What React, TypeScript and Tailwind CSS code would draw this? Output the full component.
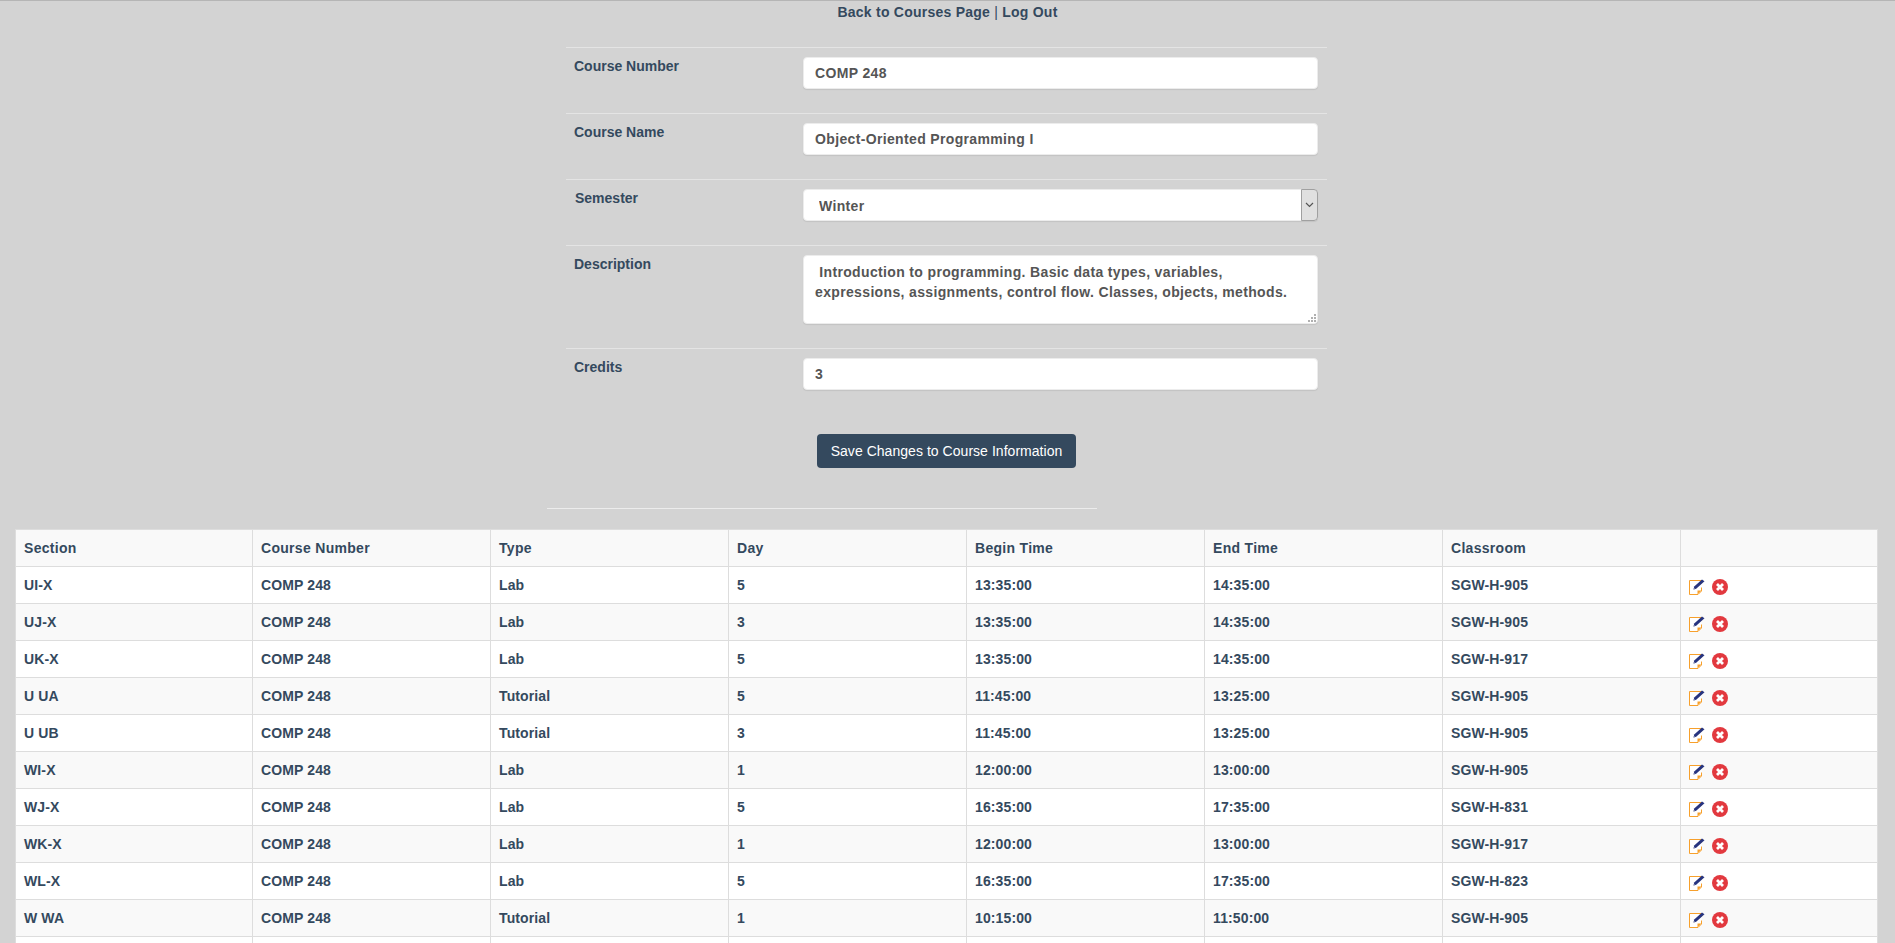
const rows = [
  ["UI-X", "COMP 248", "Lab", "5", "13:35:00", "14:35:00", "SGW-H-905"],
  ["UJ-X", "COMP 248", "Lab", "3", "13:35:00", "14:35:00", "SGW-H-905"],
  ["UK-X", "COMP 248", "Lab", "5", "13:35:00", "14:35:00", "SGW-H-917"],
  ["U UA", "COMP 248", "Tutorial", "5", "11:45:00", "13:25:00", "SGW-H-905"],
  ["U UB", "COMP 248", "Tutorial", "3", "11:45:00", "13:25:00", "SGW-H-905"],
  ["WI-X", "COMP 248", "Lab", "1", "12:00:00", "13:00:00", "SGW-H-905"],
  ["WJ-X", "COMP 248", "Lab", "5", "16:35:00", "17:35:00", "SGW-H-831"],
  ["WK-X", "COMP 248", "Lab", "1", "12:00:00", "13:00:00", "SGW-H-917"],
  ["WL-X", "COMP 248", "Lab", "5", "16:35:00", "17:35:00", "SGW-H-823"],
  ["W WA", "COMP 248", "Tutorial", "1", "10:15:00", "11:50:00", "SGW-H-905"],
];
const headers = ["Section", "Course Number", "Type", "Day", "Begin Time", "End Time", "Classroom", ""];
const inputCls =
  "block w-full h-8 px-[11px] bg-white rounded-[4px] border border-[#ececec] text-[14px] font-bold tracking-[0.35px] text-[#555555] outline-none shadow-[0_1px_1px_rgba(0,0,0,0.08)]";

function EditIcon() {
  return (
    <svg width="16" height="16" viewBox="0 0 16 16" className="block shrink-0">
      <path d="M12.5 4.5V1.5H0.5V15.5H9L12.5 12V8.5" fill="#fff" stroke="#f7a02c" strokeWidth="1" />
      <path d="M8.5 15.5V11.5H12.5Z" fill="#f7a02c" />
      <path d="M4.5 10.5L5.2 7.6L13 0.5L15.5 2.2L7.2 9.8Z" fill="#27347f" />
      <path d="M4.5 10.5L5 8.8L6.4 9.9Z" fill="#8a8fb0" />
    </svg>
  );
}

function DeleteIcon() {
  return (
    <svg width="16" height="16" viewBox="0 0 16 16" className="block shrink-0">
      <circle cx="8" cy="8" r="8" fill="#e2393f" />
      <path d="M5 5L11 11M11 5L5 11" stroke="#fff" strokeWidth="2.8" />
    </svg>
  );
}

function FormRow({ label, children, shift }: { label: string; children: React.ReactNode; shift?: boolean }) {
  return (
    <div className="flex border-t border-[#e4e4e4] pt-[9px] pb-6">
      <label className={shift ? "w-[237px] pl-[9px] -mt-px shrink-0 text-[14px] leading-5 font-bold text-[#34495e]" : "w-[237px] pl-2 -mt-px shrink-0 text-[14px] leading-5 font-bold text-[#34495e]"}>
        {label}
      </label>
      <div className="w-[515px]">{children}</div>
    </div>
  );
}

export default function App() {
  return (
    <div className="h-[943px] overflow-hidden bg-[#d3d3d3] border-t border-[#b5b5b5] font-['Liberation_Sans',Arial,sans-serif] text-[14px] leading-5 text-[#34495e]">
      <div className="text-center font-bold h-[46px] pt-[1px] tracking-[0.24px]">
        <a>Back to Courses Page</a> <span className="font-normal">|</span> <a>Log Out</a>
      </div>

      <form className="w-[761px] ml-[566px]">
        <FormRow label="Course Number">
          <input className={inputCls} defaultValue="COMP 248" readOnly />
        </FormRow>
        <FormRow label="Course Name">
          <input className={inputCls} defaultValue="Object-Oriented Programming I" readOnly />
        </FormRow>
        <FormRow label="Semester" shift>
          <div className="relative h-8">
            <select className={inputCls + " appearance-none pl-[15px] pt-px"} defaultValue="Winter">
              <option>Winter</option>
            </select>
            <span className="absolute right-0 top-0 h-8 w-[17px] flex items-center justify-center bg-[#e0e0e0] border border-[#a0a0a0] rounded-r-[4px]">
              <svg width="9" height="6" viewBox="0 0 9 6">
                <path d="M1 1L4.5 4.5L8 1" fill="none" stroke="#555" strokeWidth="1.2" />
              </svg>
            </span>
          </div>
        </FormRow>
        <FormRow label="Description">
          <div className="relative">
            <textarea
              className={inputCls + " h-[69px] py-1.5 leading-5 resize-none"}
              defaultValue=" Introduction to programming. Basic data types, variables, expressions, assignments, control flow. Classes, objects, methods."
              readOnly
            />
            <svg width="8" height="8" viewBox="0 0 8 8" className="absolute right-[2px] bottom-[2px]">
              <path d="M6 0h2v2H6zM3 3h2v2H3zM6 3h2v2H6zM0 6h2v2H0zM3 6h2v2H3zM6 6h2v2H6z" fill="#b0b0b0" />
            </svg>
          </div>
        </FormRow>
        <FormRow label="Credits">
          <input className={inputCls} defaultValue="3" readOnly />
        </FormRow>
        <div className="flex justify-center pt-5">
          <button type="button" className="h-[34px] px-[14px] bg-[#34495e] text-white text-[14px] tracking-[0.04px] rounded-[4px]">
            Save Changes to Course Information
          </button>
        </div>
      </form>

      <div className="ml-[547px] w-[550px] h-[1px] bg-[#ececec] mt-[40px]" />

      <table className="mt-5 ml-[15px] w-[1863px] table-fixed border-collapse bg-white font-bold">
        <colgroup>
          <col className="w-[237px]" />
          <col className="w-[238px]" />
          <col className="w-[238px]" />
          <col className="w-[238px]" />
          <col className="w-[238px]" />
          <col className="w-[238px]" />
          <col className="w-[238px]" />
          <col />
        </colgroup>
        <thead>
          <tr className="bg-[#f9f9f9]">
            {headers.map((h, i) => (
              <th key={i} className="border border-[#dddddd] p-2 text-left font-bold leading-5 h-[37px] tracking-[0.3px]">
                {h}
              </th>
            ))}
          </tr>
        </thead>
        <tbody>
          {rows.map((r, i) => (
            <tr key={i} className={i % 2 === 1 ? "bg-[#f9f9f9]" : "bg-white"}>
              {r.map((c, j) => (
                <td key={j} className="border border-[#dddddd] p-2 leading-5 tracking-[0.12px]">
                  {c}
                </td>
              ))}
              <td className="border border-[#dddddd] px-2 py-0">
                <div className="flex items-center gap-[7px] pt-[3px]">
                  <EditIcon />
                  <DeleteIcon />
                </div>
              </td>
            </tr>
          ))}
          <tr className="bg-white">
            {headers.map((_, j) => (
              <td key={j} className="border border-[#dddddd] h-[37px]" />
            ))}
          </tr>
        </tbody>
      </table>
    </div>
  );
}
